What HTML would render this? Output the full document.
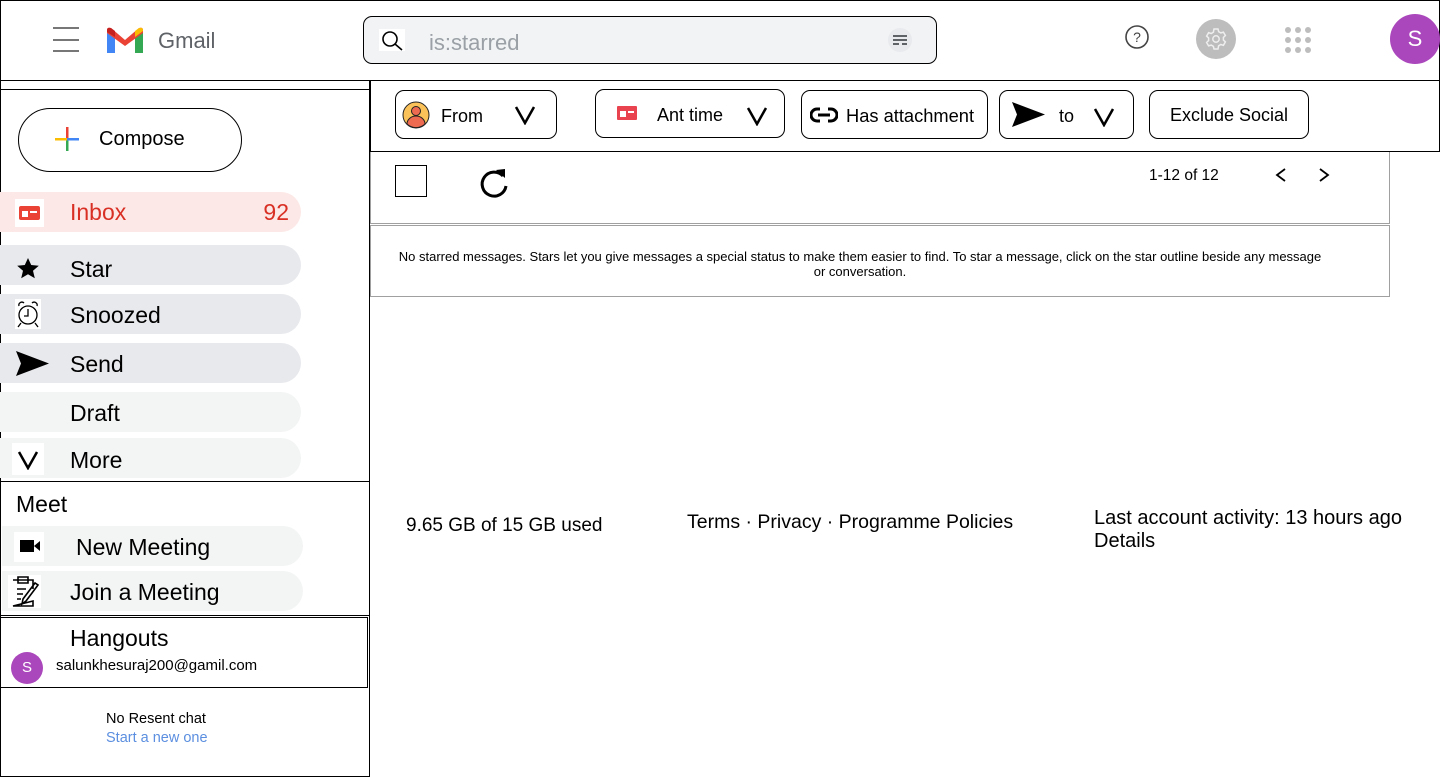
<!DOCTYPE html>
<html><head><meta charset="utf-8"><style>
*{margin:0;padding:0;box-sizing:border-box}
body{width:1440px;height:777px;position:relative;background:#fff;font-family:"Liberation Sans",Arial,sans-serif;color:#000;overflow:hidden}
.a{position:absolute}
.box{position:absolute;border:1px solid #000}
.nav{position:absolute;left:0;width:301px;height:40px;border-radius:0 20px 20px 0;font-size:23px;line-height:42px}
.nav span.t{position:absolute;left:70px}
.chip{position:absolute;top:90px;height:49px;border:1px solid #000;border-radius:9px;font-size:18px;line-height:50px}
</style></head><body>
<!-- header -->
<div class="box" style="left:0;top:0;width:1440px;height:81px"></div>
<div class="a" style="left:53px;top:27px;width:26px;height:2px;background:#777"></div>
<div class="a" style="left:53px;top:39px;width:26px;height:2px;background:#777"></div>
<div class="a" style="left:53px;top:50px;width:26px;height:2px;background:#777"></div>
<svg class="a" style="left:107px;top:27px" width="36" height="26" viewBox="0 0 36 26">
<path d="M0 3 L0 26 L8 26 L8 10 Z" fill="#4285f4"/><path d="M28 10 L28 26 L36 26 L36 3 Z" fill="#34a853"/>
<path d="M0 3 Q0 0 4 1 L18 13 L32 1 Q36 0 36 3 L36 6 L18 19 L0 6Z" fill="#ea4335"/>
<path d="M28 10 L36 4 L36 3 Q36 0 32 1 L28 4Z" fill="#fbbc04"/><path d="M0 3 Q0 0 4 1 L8 4 L8 10 L0 5Z" fill="#c5221f"/></svg>
<div class="a" style="left:158px;top:28px;font-size:22px;color:#5f6368">Gmail</div>
<div class="a" style="left:363px;top:16px;width:574px;height:48px;border:1px solid #000;border-radius:9px;background:#f1f3f4"></div>
<svg class="a" style="left:379px;top:29px" width="28" height="22"><rect width="26" height="22" fill="#fff"/><circle cx="11" cy="10" r="7" fill="none" stroke="#000" stroke-width="1.6"/><path d="M16 15 L23 21" stroke="#000" stroke-width="1.6"/></svg>
<div class="a" style="left:429px;top:30px;font-size:22px;color:#9aa0a6">is:starred</div>
<div class="a" style="left:888px;top:28px;width:24px;height:24px;border-radius:50%;background:#e8eaed"></div>
<svg class="a" style="left:893px;top:34px" width="14" height="12"><path d="M0 2H14M0 6H14M0 10H6M9 10H14" stroke="#5f6368" stroke-width="2"/></svg>
<svg class="a" style="left:1124px;top:24px" width="26" height="26"><circle cx="13" cy="13" r="11" fill="none" stroke="#444" stroke-width="1.6"/><text x="13" y="18" font-size="14" text-anchor="middle" fill="#444" font-family="Liberation Sans">?</text></svg>
<div class="a" style="left:1196px;top:19px;width:40px;height:40px;border-radius:50%;background:#bdbdbd"></div>
<svg class="a" style="left:1204px;top:27px" width="24" height="24" viewBox="0 0 24 24"><circle cx="12" cy="12" r="3.2" fill="none" stroke="#eee" stroke-width="1.5"/><path d="M10 2h4l.6 2.6 2.2 1.3 2.6-.8 2 3.4-2 1.9v2.6l2 1.9-2 3.4-2.6-.8-2.2 1.3L14 22h-4l-.6-2.6-2.2-1.3-2.6.8-2-3.4 2-1.9v-2.6l-2-1.9 2-3.4 2.6.8 2.2-1.3Z" fill="none" stroke="#eee" stroke-width="1.5"/></svg>
<svg class="a" style="left:1284px;top:26px" width="28" height="28"><g fill="#bdbdbd"><circle cx="4" cy="4" r="3"/><circle cx="14" cy="4" r="3"/><circle cx="24" cy="4" r="3"/><circle cx="4" cy="14" r="3"/><circle cx="14" cy="14" r="3"/><circle cx="24" cy="14" r="3"/><circle cx="4" cy="24" r="3"/><circle cx="14" cy="24" r="3"/><circle cx="24" cy="24" r="3"/></g></svg>
<div class="a" style="left:1390px;top:14px;width:50px;height:50px;border-radius:50%;background:#ab47bc;color:#fff;font-size:22px;line-height:50px;text-align:center">S</div>

<!-- sidebar -->
<div class="box" style="left:0;top:80px;width:370px;height:10px"></div>
<div class="a" style="left:369px;top:80px;width:1px;height:697px;background:#000"></div>
<div class="a" style="left:0;top:89px;width:1px;height:688px;background:#000"></div>
<div class="a" style="left:0;top:776px;width:370px;height:1px;background:#000"></div>
<div class="a" style="left:18px;top:108px;width:224px;height:64px;border:1px solid #000;border-radius:32px"></div>
<svg class="a" style="left:55px;top:127px" width="24" height="24"><rect x="11" y="0" width="2.5" height="12" fill="#ea4335"/><rect x="11" y="12" width="2.5" height="12" fill="#34a853"/><rect x="0" y="11" width="12" height="2.5" fill="#fbbc04"/><rect x="12" y="11" width="12" height="2.5" fill="#4285f4"/></svg>
<div class="a" style="left:99px;top:128px;font-size:20px">Compose</div>

<div class="nav" style="top:192px;background:#fce8e6;color:#d93025;line-height:40px"><svg class="a" style="left:15px;top:7px" width="29" height="28"><rect width="29" height="28" fill="#fff"/><rect x="4" y="7" width="21" height="14" rx="2" fill="#ea4335"/><rect x="7" y="12" width="6" height="6" fill="#fff"/><rect x="15" y="12" width="7" height="2" fill="#fff"/></svg><span class="t">Inbox</span><span class="a" style="right:12px">92</span></div>
<div class="nav" style="top:245px;background:#e8e9ed;line-height:48px"><svg class="a" style="left:16px;top:12px" width="24" height="24" viewBox="0 0 24 24"><path d="M12 1l3.2 7 7.6.7-5.8 5 1.8 7.5L12 17.3 5.2 21.2 7 13.7 1.2 8.7l7.6-.7Z"/></svg><span class="t">Star</span></div>
<div class="nav" style="top:294px;background:#e8e9ed"><svg class="a" style="left:15px;top:5px" width="26" height="30" viewBox="0 0 26 30"><rect width="26" height="30" fill="#fff"/><circle cx="13" cy="16" r="9" fill="none" stroke="#000" stroke-width="1.3"/><path d="M13 10v7h-4M4 7a3 3 0 0 1 5-3M22 7a3 3 0 0 0-5-3M6 24l-3 4M20 24l3 4" fill="none" stroke="#000" stroke-width="1.3"/></svg><span class="t">Snoozed</span></div>
<div class="nav" style="top:343px;background:#e8e9ed"><svg class="a" style="left:16px;top:8px" width="33" height="25"><path d="M0 0L33 12.5 0 25 5 12.5Z"/></svg><span class="t">Send</span></div>
<div class="nav" style="top:392px;background:#f3f4f4"><span class="t">Draft</span></div>
<div class="nav" style="top:438px;background:#f3f4f4;line-height:44px"><div class="a" style="left:12px;top:5px;width:32px;height:32px;background:#fff"></div><svg class="a" style="left:17px;top:12px" width="22" height="20"><path d="M2 2L11 18 20 2" fill="none" stroke="#000" stroke-width="2.5"/></svg><span class="t">More</span></div>

<div class="box" style="left:0;top:481px;width:370px;height:135px"></div>
<div class="a" style="left:16px;top:491px;font-size:23px">Meet</div>
<div class="nav" style="top:526px;left:2px;background:#f3f4f4"><div class="a" style="left:12px;top:6px;width:30px;height:30px;background:#fff"></div><svg class="a" style="left:18px;top:14px" width="20" height="12"><rect width="14" height="12" fill="#000"/><path d="M14 6L20 1V11Z"/></svg><span class="t" style="left:74px">New Meeting</span></div>
<div class="nav" style="top:571px;left:2px;background:#f3f4f4"><svg class="a" style="left:6px;top:4px" width="33" height="33" viewBox="0 0 33 33"><rect width="33" height="33" fill="#fff"/><path d="M5 5H25V14M25 26V31H5Z M10 2H20V8H10Z M9 14H18M9 19H15M9 24H13M30 10L18 26 14 29 15 24 27 8Z" fill="none" stroke="#000" stroke-width="1.6"/></svg><span class="t" style="left:68px">Join a Meeting</span></div>

<div class="box" style="left:0;top:617px;width:368px;height:71px"></div>
<div class="a" style="left:70px;top:625px;font-size:23px">Hangouts</div>
<div class="a" style="left:11px;top:652px;width:32px;height:32px;border-radius:50%;background:#ab47bc;color:#fff;font-size:15px;line-height:32px;text-align:center">S</div>
<div class="a" style="left:56px;top:657px;font-size:15px">salunkhesuraj200@gamil.com</div>
<div class="a" style="left:106px;top:711px;font-size:14.5px">No Resent chat</div>
<div class="a" style="left:106px;top:730px;font-size:14.5px;color:#5c8fe0">Start a new one</div>

<!-- filter bar -->
<div class="box" style="left:370px;top:80px;width:1070px;height:72px"></div>
<div class="chip" style="left:395px;width:162px"><svg class="a" style="left:6px;top:10px" width="28" height="28"><circle cx="14" cy="14" r="13" fill="#fbc25a" stroke="#222" stroke-width="1"/><circle cx="14" cy="10" r="4.5" fill="#ee6a50" stroke="#222"/><path d="M5 23a9 8 0 0 1 18 0 13 13 0 0 1-18 0Z" fill="#ee6a50" stroke="#222"/></svg><span class="a" style="left:45px">From</span><svg class="a" style="left:118px;top:15px" width="22" height="19"><path d="M2 1L11 17 20 1" fill="none" stroke="#000" stroke-width="2.5"/></svg></div>
<div class="chip" style="left:595px;width:190px;top:89px"><svg class="a" style="left:17px;top:12px" width="28" height="24"><rect x="4" y="4" width="20" height="14" rx="1" fill="#ea4350"/><rect x="7" y="9" width="6" height="6" fill="#fff"/><rect x="15" y="9" width="6" height="2" fill="#fff"/></svg><span class="a" style="left:61px">Ant time</span><svg class="a" style="left:150px;top:17px" width="22" height="19"><path d="M2 1L11 17 20 1" fill="none" stroke="#000" stroke-width="2.5"/></svg></div>
<div class="chip" style="left:801px;width:187px;font-size:18.3px"><svg class="a" style="left:8px;top:16px" width="28" height="16"><path d="M10 2H7a6 6 0 0 0 0 12h3M18 2h3a6 6 0 0 1 0 12h-3M8 8H20" fill="none" stroke="#000" stroke-width="3"/></svg><span class="a" style="left:44px">Has attachment</span></div>
<div class="chip" style="left:999px;width:135px"><svg class="a" style="left:12px;top:11px" width="33" height="25"><path d="M0 0L33 12.5 0 25 5 12.5Z"/></svg><span class="a" style="left:59px">to</span><svg class="a" style="left:93px;top:17px" width="22" height="19"><path d="M2 1L11 17 20 1" fill="none" stroke="#000" stroke-width="2.5"/></svg></div>
<div class="chip" style="left:1149px;width:160px;text-align:center;line-height:48px">Exclude Social</div>

<!-- toolbar -->
<div class="a" style="left:370px;top:152px;width:1020px;height:72px;border:1px solid #a0a0a0;border-top:none"></div>
<div class="a" style="left:395px;top:165px;width:32px;height:32px;border:1px solid #000"></div>
<svg class="a" style="left:476px;top:166px" width="36" height="36" viewBox="0 0 36 36"><path d="M27 10A12 12 0 1 0 30 20" fill="none" stroke="#000" stroke-width="3"/><path d="M20 4L29 3 29 12Z" fill="#000"/></svg>
<div class="a" style="left:1149px;top:167px;font-size:15.5px">1-12 of 12</div>
<svg class="a" style="left:1274px;top:167px" width="14" height="16"><path d="M11 2L3 8 11 14" fill="none" stroke="#000" stroke-width="1.8"/></svg>
<svg class="a" style="left:1317px;top:167px" width="14" height="16"><path d="M3 2L11 8 3 14" fill="none" stroke="#000" stroke-width="1.8"/></svg>
<div class="a" style="left:370px;top:225px;width:1020px;height:72px;border:1px solid #a0a0a0"></div>
<div class="a" style="left:392px;top:249px;width:936px;text-align:center;font-size:13px;line-height:15px">No starred messages. Stars let you give messages a special status to make them easier to find. To star a message, click on the star outline beside any message or conversation.</div>

<!-- footer -->
<div class="a" style="left:406px;top:515px;font-size:19px">9.65 GB of 15 GB used</div>
<div class="a" style="left:687px;top:511px;font-size:19.5px">Terms · Privacy · Programme Policies</div>
<div class="a" style="left:1094px;top:507px;font-size:20px;line-height:23px">Last account activity: 13 hours ago<br>Details</div>
</body></html>
